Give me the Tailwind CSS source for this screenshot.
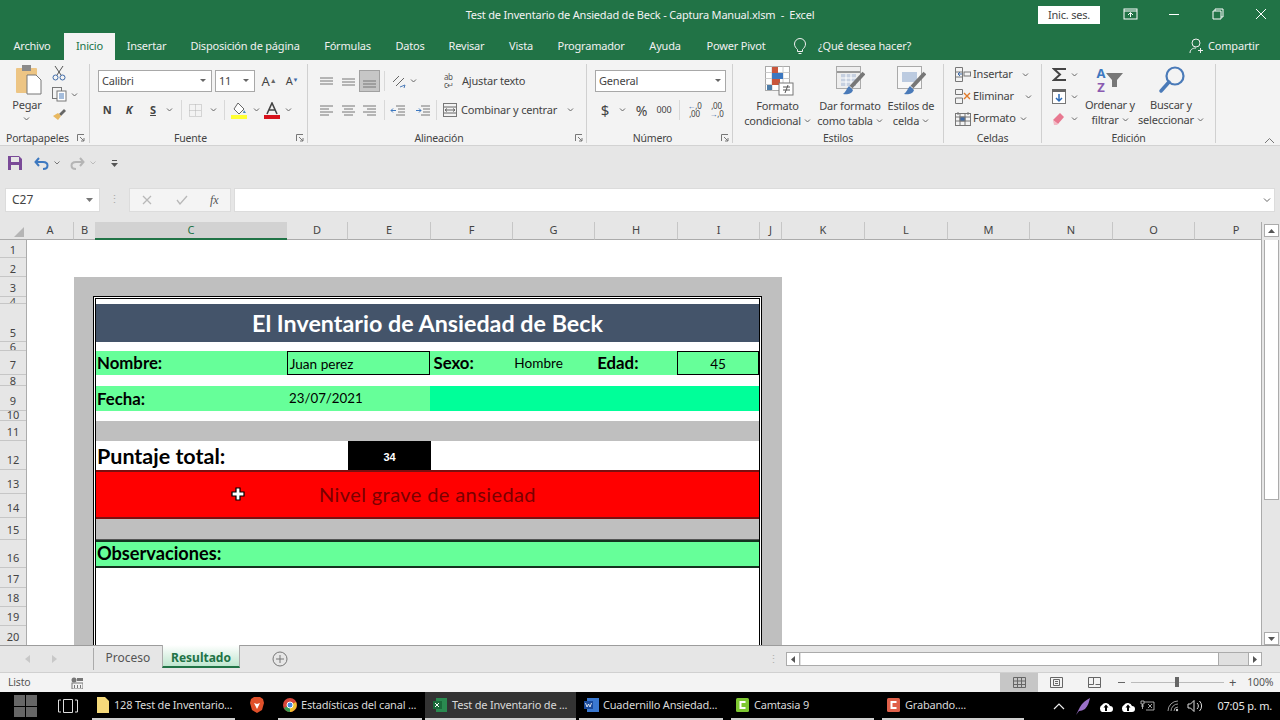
<!DOCTYPE html>
<html lang="es">
<head>
  <meta charset="UTF-8">
  <title>Test de Inventario de Ansiedad de Beck - Captura Manual.xlsm - Excel</title>
  <script src="https://cdn.jsdelivr.net/npm/@tailwindcss/browser@4"></script>
</head>
<body class="w-[1280px] h-[720px] overflow-hidden flex flex-col bg-white text-[#444] text-[11px] tracking-[-0.2px] font-['Noto_Sans',sans-serif]">

  <!-- Barra de titulo -->
  <div class="h-[33px] shrink-0 bg-[#217346] text-white flex items-start relative">
    <div class="w-full text-center pt-[7px] text-[11px] leading-[16px] text-[#f2f2f2]">Test de Inventario de Ansiedad de Beck - Captura Manual.xlsm &nbsp;-&nbsp; Excel</div>
    <div class="absolute left-[1038px] top-[6px] w-[62px] h-[18px] bg-white text-[#444] text-center leading-[18px]">Inic. ses.</div>
    <svg class="absolute left-[1123px] top-[8px]" width="15" height="12" fill="none" stroke="#fff"><rect x="1" y="1" width="13" height="10"/><path d="M1 3h13M7.500 9V5M5 7l2.500-2.500L10 7"/></svg>
    <svg class="absolute left-[1168px] top-[8px]" width="12" height="12" stroke="#fff"><path d="M1 6.500h10"/></svg>
    <svg class="absolute left-[1212px] top-[8px]" width="12" height="12" fill="none" stroke="#fff"><path d="M3 3V1h8v8H9M1 3h8v8H1z"/></svg>
    <svg class="absolute left-[1255px] top-[8px]" width="12" height="12" stroke="#fff"><path d="M1 1l10 10M11 1L1 11"/></svg>
  </div>

  <!-- Pestanas de la cinta -->
  <div class="h-[27px] shrink-0 bg-[#217346] text-[#f0f0f0] flex items-stretch leading-[26px]">
    <div class="w-[64px] text-center">Archivo</div>
    <div class="w-[51px] text-center bg-[#f3f3f3] text-[#217346]">Inicio</div>
    <div class="w-[63px] text-center">Insertar</div>
    <div class="w-[134px] text-center">Disposición de página</div>
    <div class="w-[71px] text-center">Fórmulas</div>
    <div class="w-[54px] text-center">Datos</div>
    <div class="w-[59px] text-center">Revisar</div>
    <div class="w-[50px] text-center">Vista</div>
    <div class="w-[90px] text-center">Programador</div>
    <div class="w-[58px] text-center">Ayuda</div>
    <div class="w-[84px] text-center">Power Pivot</div>
    <svg class="ml-[15px] mt-[5px]" width="14" height="17" fill="none" stroke="#f0f0f0"><path d="M4.500 11.500C3 10 1.500 8.500 1.500 6a5.500 5.500 0 0 1 11 0c0 2.500-1.500 4-3 5.500v2h-5zM5.500 15.500h3"/></svg>
    <div class="ml-[11px]">¿Qué desea hacer?</div>
    <div class="ml-auto mr-[21px] flex items-start pt-[5px] gap-[5px] leading-[16px]">
      <svg width="14" height="16" fill="none" stroke="#f0f0f0"><circle cx="7" cy="5" r="4"/><path d="M1 15c0-3 2-5 6-5M9 12.500h5M11.500 10v5"/></svg>
      <span>Compartir</span>
    </div>
  </div>

  <!-- Cinta -->
  <div class="h-[86px] shrink-0 bg-[#f3f3f3] border-b border-[#d2d2d2] flex items-stretch relative">

    <!-- Portapapeles -->
    <div class="w-[90px] shrink-0 border-r border-[#d0d0d0] mt-[4px] mb-[2px] flex flex-col">
      <div class="h-[70px] flex">
        <div class="w-[52px] flex flex-col items-center">
          <svg width="28" height="31" class="ml-[6px]"><rect x="1" y="4" width="21" height="25" rx="1" fill="#edc584"/><rect x="7" y="1" width="9" height="6" fill="#8a8a8a"/><path d="M12 11h9l5 5v14H12z" fill="#fff" stroke="#777"/></svg>
          <div class="mt-[3px] leading-[14px] ml-[2px]">Pegar</div>
          <svg class="mt-[5px]" width="7" height="4" fill="none" stroke="#666"><path d="M1 .5l2.500 2.500L6 .5"/></svg>
        </div>
        <div class="flex flex-col items-start">
          <svg width="14" height="16" fill="none" stroke="#3d6aa8" class="mt-[1px]"><path d="M3 1l6 9M11 1L5 10" stroke="#555"/><circle cx="3.500" cy="12.500" r="2.500"/><circle cx="10.500" cy="12.500" r="2.500"/></svg>
          <div class="flex items-center mt-[6px]">
            <svg width="15" height="15" fill="none" stroke="#777"><rect x=".5" y=".5" width="9" height="11" fill="#f3f3f3"/><rect x="5" y="4" width="9" height="10" fill="#fff"/><path d="M7 7h5M7 9h5M7 11h5" stroke="#4a7ab8"/></svg>
            <svg class="ml-[4px]" width="7" height="4" fill="none" stroke="#666"><path d="M1 .5l2.500 2.500L6 .5"/></svg>
          </div>
          <svg class="mt-[5px]" width="15" height="14"><path d="M7 7l5-5 2 2-5 5z" fill="#666"/><path d="M1 9l5-3 3 3-3 4z" fill="#e8b860"/></svg>
        </div>
      </div>
      <div class="flex items-center pl-[6px] h-[10px] leading-[10px] text-[10.500px]">Portapapeles
        <svg class="ml-[8px]" width="8" height="8" fill="none" stroke="#777"><path d="M.5 7V.5H7M3 3l4 4M7 4v3H4"/></svg>
      </div>
    </div>

    <!-- Fuente -->
    <div class="w-[218px] shrink-0 border-r border-[#d0d0d0] mt-[4px] mb-[2px] flex flex-col">
      <div class="h-[70px] pl-[8px] flex flex-col">
        <div class="flex items-center mt-[6px] h-[22px]">
          <div class="w-[114px] h-[22px] bg-white border border-[#a8a8a8] flex items-center justify-between px-[3px]"><span>Calibri</span><svg class="mr-[2px]" width="6" height="4" fill="#666"><path d="M0 0h6L3 3z"/></svg></div>
          <div class="ml-[3px] w-[40px] h-[22px] bg-white border border-[#a8a8a8] flex items-center justify-between px-[3px]"><span>11</span><svg class="mr-[2px]" width="6" height="4" fill="#666"><path d="M0 0h6L3 3z"/></svg></div>
          <div class="ml-[2px] w-[24px] text-center text-[13px] leading-[22px]">A<sup class="text-[#666] text-[7px]">▲</sup></div>
          <div class="w-[22px] text-center text-[11px] leading-[22px]">A<sup class="text-[#3d6aa8] text-[6px]">▼</sup></div>
        </div>
        <div class="flex items-center mt-[8px] h-[20px]">
          <div class="w-[18px] text-center font-bold">N</div>
          <div class="w-[26px] text-center font-bold italic">K</div>
          <div class="w-[22px] text-center font-bold underline">S</div>
          <div class="w-[10px] flex justify-center"><svg width="7" height="4" fill="none" stroke="#666"><path d="M1 .5l2.500 2.500L6 .5"/></svg></div>
          <div class="ml-[7px] w-px h-[20px] bg-[#d8d8d8]"></div>
          <div class="w-[27px] flex justify-center"><svg width="13" height="13" fill="none" stroke="#b5b5b5" stroke-dasharray="1 1"><path d="M.5.5h12v12H.5zM.5 6.500h12M6.500.5v12"/></svg></div>
          <div class="w-[8px] flex justify-center"><svg width="7" height="4" fill="none" stroke="#666"><path d="M1 .5l2.500 2.500L6 .5"/></svg></div>
          <div class="ml-[7px] w-px h-[20px] bg-[#d8d8d8]"></div>
          <div class="w-[28px] flex justify-center"><svg width="16" height="17"><path d="M7 1l6 6-5 5-5-5z" fill="#fff" stroke="#666"/><path d="M13 8l2 3h-3z" fill="#4a88c0"/><rect y="13" width="16" height="4" fill="#ffff33"/></svg></div>
          <div class="w-[7px] flex justify-center"><svg width="7" height="4" fill="none" stroke="#666"><path d="M1 .5l2.500 2.500L6 .5"/></svg></div>
          <div class="w-[24px] flex justify-center"><svg width="16" height="17"><path d="M3 12L8 1l5 11M5 8h6" fill="none" stroke="#444" stroke-width="1.600"/><rect y="13" width="16" height="4" fill="#d8121c"/></svg></div>
          <div class="w-[8px] flex justify-center"><svg width="7" height="4" fill="none" stroke="#666"><path d="M1 .5l2.500 2.500L6 .5"/></svg></div>
        </div>
      </div>
      <div class="flex items-center h-[10px] leading-[10px] text-[10.500px] relative"><span class="w-full text-center pr-[16px]">Fuente</span>
        <svg class="absolute right-[3px]" width="8" height="8" fill="none" stroke="#777"><path d="M.5 7V.5H7M3 3l4 4M7 4v3H4"/></svg>
      </div>
    </div>

    <!-- Alineacion -->
    <div class="w-[279px] shrink-0 border-r border-[#d0d0d0] mt-[4px] mb-[2px] flex flex-col">
      <div class="h-[70px] flex flex-col pl-[7px]">
        <div class="flex items-center mt-[6px] h-[22px]">
          <div class="w-[22px] flex justify-center"><svg width="13" height="9" stroke="#777"><path d="M0 1h13M0 4h13M0 7h13"/></svg></div>
          <div class="w-[22px] flex justify-center"><svg width="13" height="9" stroke="#777"><path d="M0 2h13M0 5h13M0 8h13"/></svg></div>
          <div class="w-[21px] h-[22px] bg-[#c6c6c6] border border-[#a0a0a0] flex items-end justify-center pb-[3px]"><svg width="13" height="9" stroke="#777"><path d="M0 2h13M0 5h13M0 8h13"/></svg></div>
          <div class="ml-[4px] w-px h-[20px] bg-[#d8d8d8]"></div>
          <div class="ml-[7px] w-[15px]"><svg width="15" height="15" fill="none" stroke="#666"><path d="M1 8l6-6M4 12l8-8"/><path d="M8 13l5-2-1 3" stroke="#4a7ab8"/></svg></div>
          <svg class="ml-[3px]" width="7" height="4" fill="none" stroke="#666"><path d="M1 .5l2.500 2.500L6 .5"/></svg>
          <div class="ml-[27px] w-[17px] text-[8px] leading-[8px] tracking-[-0.5px] text-[#555]">ab<br>c↵</div>
          <div class="ml-px">Ajustar texto</div>
        </div>
        <div class="flex items-center mt-[8px] h-[20px]">
          <div class="w-[22px] flex justify-center"><svg width="13" height="11" stroke="#777"><path d="M0 1h13M0 4h9M0 7h13M0 10h9"/></svg></div>
          <div class="w-[22px] flex justify-center"><svg width="13" height="11" stroke="#777"><path d="M0 1h13M2 4h9M0 7h13M2 10h9"/></svg></div>
          <div class="w-[21px] flex justify-center"><svg width="13" height="11" stroke="#777"><path d="M0 1h13M4 4h9M0 7h13M4 10h9"/></svg></div>
          <div class="ml-[4px] w-px h-[20px] bg-[#d8d8d8]"></div>
          <div class="ml-[5px] w-[22px]"><svg width="15" height="11" fill="none" stroke="#777"><path d="M6 1h9M8 4h7M8 7h7M6 10h9"/><path d="M6 5.500H1m2-2l-2 2 2 2" stroke="#3d78c0"/></svg></div>
          <div class="ml-[3px] w-[21px]"><svg width="15" height="11" fill="none" stroke="#777"><path d="M6 1h9M8 4h7M8 7h7M6 10h9"/><path d="M1 5.500h5m-2-2l2 2-2 2" stroke="#3d78c0"/></svg></div>
          <div class="w-px h-[20px] bg-[#d8d8d8]"></div>
          <div class="ml-[6px] w-[18px]"><svg width="14" height="14" fill="none" stroke="#777"><rect x=".5" y=".5" width="13" height="13"/><path d="M1 4h12M1 10h12M2 7h10M4 5.500L2 7l2 1.500M10 5.500L12 7l-2 1.500" stroke="#666"/></svg></div>
          <div>Combinar y centrar</div>
          <svg class="ml-[10px]" width="7" height="4" fill="none" stroke="#666"><path d="M1 .5l2.500 2.500L6 .5"/></svg>
        </div>
      </div>
      <div class="flex items-center h-[10px] leading-[10px] text-[10.500px] relative"><span class="w-full text-center pr-[16px]">Alineación</span>
        <svg class="absolute right-[3px]" width="8" height="8" fill="none" stroke="#777"><path d="M.5 7V.5H7M3 3l4 4M7 4v3H4"/></svg>
      </div>
    </div>

    <!-- Numero -->
    <div class="w-[146px] shrink-0 border-r border-[#d0d0d0] mt-[4px] mb-[2px] flex flex-col">
      <div class="h-[70px] flex flex-col pl-[8px]">
        <div class="mt-[6px] w-[131px] h-[22px] bg-white border border-[#a8a8a8] flex items-center justify-between px-[3px]"><span>General</span><svg class="mr-[1px]" width="6" height="4" fill="#666"><path d="M0 0h6L3 3z"/></svg></div>
        <div class="flex items-center mt-[8px] h-[20px]">
          <div class="w-[20px] text-center text-[15px]">$</div>
          <svg class="ml-[4px]" width="7" height="4" fill="none" stroke="#666"><path d="M1 .5l2.500 2.500L6 .5"/></svg>
          <div class="ml-[5px] w-[21px] text-center text-[14px]">%</div>
          <div class="ml-[1px] w-[22px] text-center text-[9px]">000</div>
          <div class="ml-[4px] w-px h-[20px] bg-[#d8d8d8]"></div>
          <div class="ml-[6px] w-[17px] text-[8px] leading-[8px] text-center"><span class="text-[#3d6aa8]">←</span>,0<br>,00</div>
          <div class="ml-[5px] w-[17px] text-[8px] leading-[8px] text-center">,00<br><span class="text-[#3d6aa8]">→</span>,0</div>
        </div>
      </div>
      <div class="flex items-center h-[10px] leading-[10px] text-[10.500px] relative"><span class="w-full text-center pr-[14px]">Número</span>
        <svg class="absolute right-[3px]" width="8" height="8" fill="none" stroke="#777"><path d="M.5 7V.5H7M3 3l4 4M7 4v3H4"/></svg>
      </div>
    </div>

    <!-- Estilos -->
    <div class="w-[211px] shrink-0 border-r border-[#d0d0d0] mt-[4px] mb-[2px] flex flex-col">
      <div class="h-[70px] flex text-center leading-[15px]">
        <div class="w-[77px] ml-[6px] flex flex-col items-center">
          <svg width="29" height="30" class="mt-[2px] ml-[3px]"><rect x=".5" y=".5" width="24" height="24" fill="#fff" stroke="#aaa"/><path d="M.5 6.500h24M.5 12.500h24M.5 18.500h24M7 .5v24M18 .5v24" stroke="#ccc"/><rect x="7" y="1" width="6" height="6" fill="#c9563c"/><rect x="7" y="7" width="11" height="6" fill="#3d78c0"/><rect x="7" y="13" width="8" height="6" fill="#c9563c"/><rect x="2" y="19" width="5" height="5" fill="#4d7da8"/><rect x="14" y="17" width="14" height="12" fill="#fff" stroke="#777"/><path d="M18 21h7M18 24h7M23 19l-3 8" stroke="#555" fill="none"/></svg>
          <div class="mt-[2px]">Formato</div>
          <div class="flex items-center gap-[3px] whitespace-nowrap">condicional<svg width="7" height="4" fill="none" stroke="#666"><path d="M1 .5l2.500 2.500L6 .5"/></svg></div>
        </div>
        <div class="w-[70px] -ml-px flex flex-col items-center">
          <svg width="29" height="30" class="mt-[2px]"><rect x=".5" y=".5" width="24" height="22" fill="#eee" stroke="#aaa"/><path d="M1 6h23" stroke="#999" stroke-width="2"/><rect x="5" y="8" width="15" height="12" fill="#c6d0e0"/><path d="M5 12h15M5 16h15M10 8v12M15 8v12" stroke="#fff"/><path d="M28 7L15 21" stroke="#777" stroke-width="4"/><path d="M13 20l4 4c-1 4-6 5-10 4 3-2 3-5 6-8z" fill="#4a7ab8"/></svg>
          <div class="mt-[2px]">Dar formato</div>
          <div class="flex items-center gap-[3px] whitespace-nowrap">como tabla<svg width="7" height="4" fill="none" stroke="#666"><path d="M1 .5l2.500 2.500L6 .5"/></svg></div>
        </div>
        <div class="w-[54px] -ml-px flex flex-col items-center">
          <svg width="29" height="30" class="mt-[2px]"><rect x=".5" y=".5" width="24" height="22" fill="#f8f8f8" stroke="#aaa"/><rect x="5" y="6" width="15" height="10" fill="#bccbe0"/><path d="M28 7L15 21" stroke="#777" stroke-width="4"/><path d="M13 20l4 4c-1 4-6 5-10 4 3-2 3-5 6-8z" fill="#4a7ab8"/></svg>
          <div class="mt-[2px] whitespace-nowrap">Estilos de</div>
          <div class="flex items-center gap-[3px]">celda<svg width="7" height="4" fill="none" stroke="#666"><path d="M1 .5l2.500 2.500L6 .5"/></svg></div>
        </div>
      </div>
      <div class="h-[10px] leading-[10px] text-[10.500px] text-center">Estilos</div>
    </div>

    <!-- Celdas -->
    <div class="w-[98px] shrink-0 border-r border-[#d0d0d0] mt-[4px] mb-[2px] flex flex-col">
      <div class="h-[70px] pl-[11px] flex flex-col pt-[2px] gap-[5px]">
        <div class="flex items-center h-[17px]"><svg width="16" height="15" fill="none" stroke="#777"><path d="M.5.5h7v14h-7zM.5 5h7M.5 10h7"/><rect x="9" y="5" width="6.500" height="4" /><path d="M7 7H3m2-2L3 7l2 2" stroke="#3d6aa8"/></svg><span class="ml-[2px]">Insertar</span><svg class="ml-[9px]" width="7" height="4" fill="none" stroke="#666"><path d="M1 .5l2.500 2.500L6 .5"/></svg></div>
        <div class="flex items-center h-[17px]"><svg width="16" height="15" fill="none" stroke="#777"><path d="M.5.5h7v5h-7zM.5 9h7v5.500h-7z"/><path d="M9 4l6 6M15 4l-6 6" stroke="#e07a2a" stroke-width="1.400"/></svg><span class="ml-[2px]">Eliminar</span><svg class="ml-[11px]" width="7" height="4" fill="none" stroke="#666"><path d="M1 .5l2.500 2.500L6 .5"/></svg></div>
        <div class="flex items-center h-[17px]"><svg width="16" height="15" fill="none" stroke="#777"><rect x=".5" y="2.500" width="15" height="12"/><path d="M.5 6h15M.5 10h15M5 2.500v12M10 2.500v12M3 1v3M13 1v3"/><rect x="5" y="6" width="5" height="4" fill="#3d6aa8"/></svg><span class="ml-[2px]">Formato</span><svg class="ml-[4px]" width="7" height="4" fill="none" stroke="#666"><path d="M1 .5l2.500 2.500L6 .5"/></svg></div>
      </div>
      <div class="h-[10px] leading-[10px] text-[10.500px] text-center">Celdas</div>
    </div>

    <!-- Edicion -->
    <div class="w-[174px] shrink-0 border-r border-[#d0d0d0] mt-[4px] mb-[2px] flex flex-col">
      <div class="h-[70px] flex">
        <div class="w-[35px] ml-[10px] flex flex-col pt-[2px] gap-[5px]">
          <div class="flex items-center h-[17px]"><svg width="15" height="15" fill="none" stroke="#444" stroke-width="2"><path d="M14 2H2l6 5.500L2 13h12"/></svg><svg class="ml-[4px]" width="7" height="4" fill="none" stroke="#666"><path d="M1 .5l2.500 2.500L6 .5"/></svg></div>
          <div class="flex items-center h-[17px]"><svg width="14" height="15"><rect x=".5" y=".5" width="13" height="14" fill="#fff" stroke="#777"/><rect width="14" height="3" fill="#666"/><path d="M7 5v7M4 9l3 3 3-3" fill="none" stroke="#2a6ab8" stroke-width="1.500"/></svg><svg class="ml-[5px]" width="7" height="4" fill="none" stroke="#666"><path d="M1 .5l2.500 2.500L6 .5"/></svg></div>
          <div class="flex items-center h-[17px]"><svg width="13" height="13"><path d="M8 1l4 4-6 7-5-4z" fill="#e87890"/><path d="M1 8l5 4-1 1H2z" fill="#f2b8c4"/></svg><svg class="ml-[6px]" width="7" height="4" fill="none" stroke="#666"><path d="M1 .5l2.500 2.500L6 .5"/></svg></div>
        </div>
        <div class="w-[54px] -ml-[4px] flex flex-col items-center text-center leading-[15px]">
          <div class="flex h-[30px] items-center mt-[1px]"><div class="text-[13px] leading-[14px] font-bold"><span class="text-[#3d78c0]">A</span><br><span class="text-[#8a5ab0]">Z</span></div><svg class="ml-[1px]" width="17" height="14"><path d="M0 0h17l-6 7v7H6V7z" fill="#777"/></svg></div>
          <div class="mt-[2px] whitespace-nowrap">Ordenar y</div>
          <div class="flex items-center gap-[3px]">filtrar<svg width="7" height="4" fill="none" stroke="#666"><path d="M1 .5l2.500 2.500L6 .5"/></svg></div>
        </div>
        <div class="w-[68px] flex flex-col items-center text-center leading-[15px]">
          <svg class="mt-[1px]" width="27" height="30" fill="none" stroke="#4a7ab8"><circle cx="17" cy="11" r="8.500" stroke-width="2.200"/><path d="M11 17l-8 9" stroke-width="3.500" stroke-linecap="round"/></svg>
          <div class="mt-[2px] whitespace-nowrap">Buscar y</div>
          <div class="flex items-center gap-[3px] whitespace-nowrap">seleccionar<svg width="7" height="4" fill="none" stroke="#666"><path d="M1 .5l2.500 2.500L6 .5"/></svg></div>
        </div>
      </div>
      <div class="h-[10px] leading-[10px] text-[10.500px] text-center">Edición</div>
    </div>

    <svg class="absolute left-[1264px] top-[77px]" width="11" height="7" fill="none" stroke="#777"><path d="M1 6l4.500-4.500L10 6"/></svg>
  </div>

  <!-- Barra de acceso rapido -->
  <div class="h-[34px] shrink-0 bg-[#e6e6e6] flex items-center pl-[8px]">
    <svg width="14" height="14"><path d="M0 0h11l3 3v11H0z" fill="#7a4a98"/><rect x="3" y="1" width="8" height="5" fill="#e6e6e6"/><rect x="3" y="9" width="8" height="5" fill="#e6e6e6"/></svg>
    <svg class="ml-[12px]" width="15" height="13" fill="none" stroke="#3d78c0" stroke-width="2"><path d="M5 1L1.500 5 5 9M2 5h7c6 0 6 7 0 7"/></svg>
    <svg class="ml-[5px]" width="6" height="4" fill="none" stroke="#777"><path d="M.5.5L3 3 5.500.5"/></svg>
    <svg class="ml-[10px]" width="15" height="13" fill="none" stroke="#b5b5b5" stroke-width="2"><path d="M10 1l3.500 4L10 9M13 5H6c-6 0-6 7 0 7"/></svg>
    <svg class="ml-[5px]" width="6" height="4" fill="none" stroke="#bbb"><path d="M.5.5L3 3 5.500.5"/></svg>
    <svg class="ml-[15px]" width="7" height="7" fill="#555"><path d="M1 0h5v1H1zM0 3h7L3.500 7z"/></svg>
  </div>

  <!-- Barra de formulas -->
  <div class="h-[42px] shrink-0 bg-[#e6e6e6] flex items-start pt-[8px] pl-[5px]">
    <div class="w-[95px] h-[24px] bg-white border border-[#dcdcdc] flex items-center justify-between pl-[6px] pr-[6px] text-[12px] tracking-normal"><span>C27</span><svg width="7" height="4" fill="#777"><path d="M0 0h7L3.500 4z"/></svg></div>
    <div class="w-[29px] h-[24px] text-[#aaa] text-center leading-[22px]">⋮</div>
    <div class="w-[102px] h-[24px] bg-[#f4f4f4] border border-[#dcdcdc] flex items-center">
      <svg class="ml-[12px]" width="10" height="10" stroke="#b8b8b8" stroke-width="1.300"><path d="M1 1l8 8M9 1L1 9"/></svg>
      <svg class="ml-[24px]" width="12" height="10" fill="none" stroke="#b8b8b8" stroke-width="1.300"><path d="M1 5l3 4 7-8"/></svg>
      <span class="ml-[22px] text-[12px] italic font-['Liberation_Serif',serif] text-[#555]">fx</span>
    </div>
    <div class="ml-[3px] w-[1041px] h-[24px] bg-white border border-[#dcdcdc] flex items-center justify-end pr-[3px]"><svg width="8" height="5" fill="none" stroke="#666"><path d="M1 .5l3 3 3-3"/></svg></div>
  </div>

  <!-- Encabezados de columna -->
  <div class="h-[18px] shrink-0 bg-[#e6e6e6] flex text-center leading-[16px] text-[11px] tracking-normal text-[#444]">
    <div class="w-[27px] flex items-end justify-end pr-[3px] pb-[2px] border-b border-[#ababab]"><svg width="10" height="10" fill="#b5b5b5"><path d="M10 0v10H0z"/></svg></div>
    <div class="w-[47px] border-r border-b border-[#c6c6c6] border-b-[#ababab]">A</div>
    <div class="w-[21px] border-b border-[#ababab]">B</div>
    <div class="w-[192px] bg-[#d2d2d2] border-b-2 border-[#217346] text-[#217346]">C</div>
    <div class="w-[61px] border-r border-b border-[#c6c6c6] border-b-[#ababab]">D</div>
    <div class="w-[83px] border-r border-b border-[#c6c6c6] border-b-[#ababab]">E</div>
    <div class="w-[82px] border-r border-b border-[#c6c6c6] border-b-[#ababab]">F</div>
    <div class="w-[82px] border-r border-b border-[#c6c6c6] border-b-[#ababab]">G</div>
    <div class="w-[83px] border-r border-b border-[#c6c6c6] border-b-[#ababab]">H</div>
    <div class="w-[82px] border-r border-b border-[#c6c6c6] border-b-[#ababab]">I</div>
    <div class="w-[22px] border-r border-b border-[#c6c6c6] border-b-[#ababab]">J</div>
    <div class="w-[83px] border-r border-b border-[#c6c6c6] border-b-[#ababab]">K</div>
    <div class="w-[83px] border-r border-b border-[#c6c6c6] border-b-[#ababab]">L</div>
    <div class="w-[82px] border-r border-b border-[#c6c6c6] border-b-[#ababab]">M</div>
    <div class="w-[83px] border-r border-b border-[#c6c6c6] border-b-[#ababab]">N</div>
    <div class="w-[82px] border-r border-b border-[#c6c6c6] border-b-[#ababab]">O</div>
    <div class="w-[67px] pl-[16px] border-r border-b border-[#ababab]">P</div>
    <div class="w-[18px] flex justify-end pr-px pt-[2px]">
      <div class="w-[15px] h-[13px] bg-white border border-[#ababab] flex items-center justify-center"><svg width="7" height="4" fill="#555"><path d="M3.500 0L7 4H0z"/></svg></div>
    </div>
  </div>

  <!-- Hoja -->
  <div class="h-[405px] shrink-0 flex overflow-hidden">
    <!-- Encabezados de fila -->
    <div class="w-[27px] shrink-0 bg-[#e6e6e6] border-r border-[#ababab] flex flex-col text-[11px] leading-none tracking-normal text-[#444] text-center overflow-hidden">
      <div class="h-[18px] shrink-0 border-b border-[#c6c6c6] flex items-end justify-center pb-[2px]">1</div>
      <div class="h-[19px] shrink-0 border-b border-[#c6c6c6] flex items-end justify-center pb-[2px]">2</div>
      <div class="h-[20px] shrink-0 border-b border-[#c6c6c6] flex items-end justify-center pb-[3px]">3</div>
      <div class="h-[7px] shrink-0 border-b border-[#c6c6c6] flex items-end justify-center overflow-hidden"><span class="-mb-[4px] text-[#555]">4</span></div>
      <div class="h-[38px] shrink-0 border-b border-[#c6c6c6] flex items-end justify-center pb-[3px]">5</div>
      <div class="h-[9px] shrink-0 border-b border-[#c6c6c6] flex items-end justify-center overflow-hidden"><span class="-mb-[2px]">6</span></div>
      <div class="h-[24px] shrink-0 border-b border-[#c6c6c6] flex items-end justify-center pb-[4px]">7</div>
      <div class="h-[11px] shrink-0 border-b border-[#c6c6c6] flex items-end justify-center overflow-hidden"><span class="-mb-px">8</span></div>
      <div class="h-[25px] shrink-0 border-b border-[#c6c6c6] flex items-end justify-center pb-[4px]">9</div>
      <div class="h-[10px] shrink-0 border-b border-[#c6c6c6] flex items-end justify-center overflow-hidden"><span>10</span></div>
      <div class="h-[20px] shrink-0 border-b border-[#c6c6c6] flex items-end justify-center pb-[3px]">11</div>
      <div class="h-[29px] shrink-0 border-b border-[#c6c6c6] flex items-end justify-center pb-[4px]">12</div>
      <div class="h-[24px] shrink-0 border-b border-[#c6c6c6] flex items-end justify-center pb-[4px]">13</div>
      <div class="h-[24px] shrink-0 border-b border-[#c6c6c6] flex items-end justify-center pb-[4px]">14</div>
      <div class="h-[22px] shrink-0 border-b border-[#c6c6c6] flex items-end justify-center pb-[4px]">15</div>
      <div class="h-[28px] shrink-0 border-b border-[#c6c6c6] flex items-end justify-center pb-[4px]">16</div>
      <div class="h-[20px] shrink-0 border-b border-[#c6c6c6] flex items-end justify-center pb-[3px]">17</div>
      <div class="h-[19px] shrink-0 border-b border-[#c6c6c6] flex items-end justify-center pb-[3px]">18</div>
      <div class="h-[19px] shrink-0 border-b border-[#c6c6c6] flex items-end justify-center pb-[3px]">19</div>
      <div class="h-[19px] shrink-0 flex items-end justify-center pb-[3px]">20</div>
    </div>

    <!-- Celdas -->
    <div class="w-[1235px] shrink-0 border-r border-[#ababab] pt-[37px] pl-[47px] overflow-hidden font-['Lato',sans-serif] tracking-normal text-black">
      <div class="w-[708px] h-[400px] bg-[#bfbfbf] pt-[19px] pl-[19px]">
        <div class="w-[669px] h-[400px] border-[3px] border-double border-black bg-white flex flex-col">
          <div class="h-[5px] shrink-0"></div>
          <div class="h-[38px] shrink-0 bg-[#44546a] text-white text-center font-bold text-[23.300px] leading-[38px]">El Inventario de Ansiedad de Beck</div>
          <div class="h-[9px] shrink-0"></div>
          <div class="h-[24px] shrink-0 bg-[#66ff99] flex items-center font-bold text-[16.800px]">
            <div class="w-[191px] pl-[1px]">Nombre:</div>
            <div class="w-[144px] h-[24px] border border-black font-normal text-[13.600px] leading-[25px] pl-[2px]">Juan perez</div>
            <div class="w-[82px] pl-[3px]">Sexo:</div>
            <div class="w-[82px] pl-[2px] font-normal text-[13.600px] pt-[1px]">Hombre</div>
            <div class="w-[83px] pl-[3px]">Edad:</div>
            <div class="w-[82px] h-[24px] border border-black font-normal text-[13.600px] text-center leading-[25px]">45</div>
          </div>
          <div class="h-[11px] shrink-0"></div>
          <div class="h-[25px] shrink-0 flex items-center font-bold text-[16.800px] bg-[#00ff99]">
            <div class="w-[334px] h-full bg-[#66ff99] flex items-center">
              <div class="w-[191px] pl-[1px]">Fecha:</div>
              <div class="font-normal text-[13.300px] pl-[2px] pt-[1px]">23/07/2021</div>
            </div>
          </div>
          <div class="h-[10px] shrink-0"></div>
          <div class="h-[20px] shrink-0 bg-[#bfbfbf]"></div>
          <div class="h-[29px] shrink-0 flex items-center font-bold text-[21.500px]">
            <div class="w-[252px] pl-[1px] pt-[1px]">Puntaje total:</div>
            <div class="w-[83px] h-full bg-black text-white text-center text-[11px] leading-[32px] font-['Liberation_Sans',sans-serif]">34</div>
          </div>
          <div class="h-[49px] shrink-0 bg-[#ff0000] border-y-2 border-[#7a1010] text-[#7a0000] text-center text-[20px] tracking-[0.4px] leading-[45px] relative">
            Nivel grave de ansiedad
            <svg class="absolute left-[135px] top-[15px]" width="14" height="14"><path d="M5 1h4v4h4v4H9v4H5V9H1V5h4z" fill="#fff" stroke="#000" stroke-width="1.200"/></svg>
          </div>
          <div class="h-[21px] shrink-0 bg-[#bfbfbf] border-b border-[#555]"></div>
          <div class="h-[28px] shrink-0 bg-[#66ff99] border-y-2 border-black/80 font-bold text-[18.200px] leading-[22px] pl-[1px]">Observaciones:</div>
        </div>
      </div>
    </div>

    <!-- Barra vertical -->
    <div class="w-[18px] shrink-0 bg-[#e6e6e6] flex flex-col items-end pr-px">
      <div class="w-[15px] h-[260px] bg-white border-x border-b border-[#ababab]"></div>
      <div class="mt-auto w-[15px] h-[13px] bg-white border border-[#ababab] flex items-center justify-center"><svg width="7" height="4" fill="#555"><path d="M0 0h7L3.500 4z"/></svg></div>
    </div>
  </div>

  <!-- Pestanas de hojas -->
  <div class="h-[27px] shrink-0 bg-[#e6e6e6] border-t border-[#9c9c9c] flex items-start relative z-10">
    <svg class="ml-[25px] mt-[9px]" width="5" height="8" fill="#c8c8c8"><path d="M5 0v8L0 4z"/></svg>
    <svg class="ml-[22px] mt-[9px]" width="5" height="8" fill="#c8c8c8"><path d="M0 0v8l5-4z"/></svg>
    <div class="ml-[36px] mt-[2px] w-px h-[22px] bg-[#ababab]"></div>
    <div class="w-[68px] text-center leading-[24px] text-[12px] tracking-normal text-[#555]">Proceso</div>
    <div class="w-[78px] h-[23px] -mt-px bg-gradient-to-b from-white to-[#bfe6cf] border-x border-b-2 border-x-[#ababab] border-b-[#217346] text-center font-bold text-[12px] tracking-normal leading-[25px] text-[#217346]">Resultado</div>
    <svg class="ml-[32px] mt-[5px]" width="16" height="16" fill="none" stroke="#777"><circle cx="8" cy="8" r="7"/><path d="M8 4v8M4 8h8"/></svg>
    <div class="absolute left-[768px] top-[5px] text-[#b0b0b0] leading-[16px]">⋮</div>
    <div class="absolute left-[786px] top-[6px] w-[476px] h-[14px] bg-[#e0e0e0] border border-[#ababab] flex items-stretch">
      <div class="w-[13px] bg-white border-r border-[#ababab] flex items-center justify-center"><svg width="4" height="7" fill="#555"><path d="M4 0v7L0 3.500z"/></svg></div>
      <div class="ml-px w-[418px] bg-white border-r border-[#ababab]"></div>
      <div class="ml-auto w-[13px] bg-white border-l border-[#ababab] flex items-center justify-center"><svg width="4" height="7" fill="#555"><path d="M0 0v7l4-3.500z"/></svg></div>
    </div>
  </div>

  <!-- Barra de estado -->
  <div class="h-[20px] shrink-0 bg-[#f3f3f3] border-t border-[#d0d0d0] flex items-center text-[10.500px] text-[#555]">
    <span class="ml-[8px] w-[63px]">Listo</span>
    <svg width="12" height="12" fill="#777"><circle cx="3" cy="3" r="2.500"/><rect x="1" y="6" width="11" height="6" fill="none" stroke="#777"/><path d="M6 1h6v3H6zM3 8h1v3H3zM6 8h1v3H6zM9 8h1v3H9z"/></svg>
    <div class="ml-[917px] w-[38px] h-full bg-[#c6c6c6] flex items-center justify-center"><svg width="13" height="11" fill="none" stroke="#666"><path d="M.5.5h12v10H.5zM.5 4h12M.5 7.500h12M4.500.5v10M8.500.5v10"/></svg></div>
    <svg class="ml-[12px]" width="13" height="11" fill="none" stroke="#666"><path d="M.5.5h12v10H.5zM3.500 2.500h6v6h-6zM5 4.500h3M5 6.500h3"/></svg>
    <svg class="ml-[25px]" width="13" height="11" fill="none" stroke="#666"><path d="M.5.5h12v10H.5zM.5 7.500h5V.5M12.500 7.500h-5"/></svg>
    <span class="ml-[17px] w-[7px] h-[1.500px] bg-[#666]"></span>
    <div class="ml-[6px] w-[93px] h-px bg-[#bbb] relative"><div class="absolute left-[44px] -top-[5px] w-[4px] h-[10px] bg-[#666]"></div></div>
    <span class="ml-[5px] text-[13px] leading-none">+</span>
    <span class="ml-[11px] w-[26px] text-right">100%</span>
  </div>

  <!-- Barra de tareas -->
  <div class="h-[28px] shrink-0 bg-black text-[#d8d8d8] flex items-stretch text-[11px] relative">
    <div class="ml-[14px] mt-[3px] w-[23px] h-[22px] grid grid-cols-2 gap-[1px]">
      <div class="bg-[#666]"></div><div class="bg-[#666]"></div><div class="bg-[#666]"></div><div class="bg-[#666]"></div>
    </div>
    <svg class="ml-[21px] mt-[7px]" width="20" height="14" fill="none" stroke="#ddd"><path d="M3 1H.5v12H3M17 1h2.500v12H17M5.500.5h9v13h-9z"/></svg>
    <div class="ml-[14px] w-[143px] border-b-2 border-[#cfcfcf] flex items-center pl-[5px] gap-[5px] whitespace-nowrap">
      <svg width="12" height="16"><path d="M0 0h8l4 4v12H0z" fill="#f5d97a"/></svg><span>128 Test de Inventario...</span>
    </div>
    <div class="w-[43px] flex items-center justify-center pb-[2px]">
      <svg width="14" height="16"><path d="M1 2l3-2h6l3 2 1 4-2 7-5 3-5-3-2-7z" fill="#e0502a"/><path d="M4 6l3 1 3-1-3 6z" fill="#fff"/></svg>
    </div>
    <div class="w-[144px] border-b-2 border-[#cfcfcf] flex items-center pl-[5px] gap-[4px]">
      <svg width="14" height="14"><circle cx="7" cy="7" r="7" fill="#d8463a"/><path d="M7 7L1 10a7 7 0 0 0 6 4z" fill="#3a9c50"/><path d="M7 7l6-3a7 7 0 0 1-6 10z" fill="#f0c030"/><circle cx="7" cy="7" r="3" fill="#4a88e0" stroke="#fff"/></svg><span class="whitespace-nowrap">Estadísticas del canal ...</span>
    </div>
    <div class="ml-[3px] w-[151px] bg-[#333] border-b-2 border-[#cfcfcf] flex items-center pl-[8px] gap-[5px]">
      <svg width="14" height="14"><rect x="3" width="11" height="14" fill="#2a8a50"/><rect y="3" width="9" height="8" fill="#1a6a3a"/><path d="M2 5l4 4M6 5L2 9" stroke="#fff"/></svg><span class="whitespace-nowrap">Test de Inventario de ...</span>
    </div>
    <div class="ml-[3px] w-[144px] border-b-2 border-[#cfcfcf] flex items-center pl-[5px] gap-[4px]">
      <svg width="15" height="14"><rect x="3" width="12" height="14" fill="#3a78d0"/><rect y="3" width="9" height="8" fill="#1a4a9a"/><path d="M1.500 5l1.500 4 1.500-3 1.500 3 1.500-4" stroke="#fff" fill="none" stroke-width=".8"/></svg><span class="whitespace-nowrap">Cuadernillo Ansiedad...</span>
    </div>
    <div class="ml-[8px] w-[143px] border-b-2 border-[#cfcfcf] flex items-center pl-[5px] gap-[4px]">
      <svg width="13" height="14"><rect width="13" height="14" rx="1.500" fill="#7ec832"/><path d="M9.500 4h-5v6h5" fill="none" stroke="#fff" stroke-width="2"/></svg><span class="ml-[1px]">Camtasia 9</span>
    </div>
    <div class="ml-[8px] w-[142px] border-b-2 border-[#cfcfcf] flex items-center pl-[5px] gap-[4px]">
      <svg width="13" height="14"><rect width="13" height="14" rx="1.500" fill="#e0604a"/><path d="M9.500 4h-5v6h5" fill="none" stroke="#fff" stroke-width="2"/></svg><span class="ml-[1px]">Grabando....</span>
    </div>
    <div class="ml-auto flex items-center pr-[8px] text-[#e8e8e8]">
      <svg width="12" height="7" fill="none" stroke="#eee" stroke-width="1.200"><path d="M1 6l5-5 5 5"/></svg>
      <svg class="ml-[11px]" width="14" height="17"><path d="M0 17L4 9c2-4 6-7 10-9-1 4-2 8-5 11-2 1-4 2-6 2z" fill="#9a70c8"/></svg>
      <svg class="ml-[8px]" width="16" height="11"><path d="M4 11a4 4 0 0 1 0-7 4.500 4.500 0 0 1 8 1 3 3 0 0 1 0 6z" fill="#fff"/><path d="M8 3.500L5.500 6.500H7V10h2V6.500h1.500z" fill="#000"/></svg>
      <svg class="ml-[6px]" width="16" height="11"><path d="M4 11a4 4 0 0 1 0-7 4.500 4.500 0 0 1 8 1 3 3 0 0 1 0 6z" fill="#fff"/><path d="M8 3.500L5.500 6.500H7V10h2V6.500h1.500z" fill="#000"/></svg>
      <svg class="ml-[4px]" width="15" height="12" fill="none" stroke="#ccc" stroke-width=".8"><path d="M4 2h10v8H6M1 1h3v3H1zM1 6h3M2.500 4v5M8 4l4 4M12 4L8 8"/></svg>
      <svg class="ml-[12px]" width="12" height="12" fill="none" stroke="#aaa"><path d="M1 11a10 10 0 0 1 10-10M4 11a7 7 0 0 1 7-7M7 11a4 4 0 0 1 4-4" stroke-width=".9"/><circle cx="10" cy="10" r="1.200" fill="#ccc" stroke="none"/></svg>
      <svg class="ml-[8px]" width="16" height="14" fill="none" stroke="#ddd"><path d="M1 5h2.500L7 1.500v11L3.500 9H1zM10 4a4 4 0 0 1 0 6M12.500 2a7 7 0 0 1 0 10"/></svg>
      <span class="ml-[14px] text-[11px] whitespace-nowrap">07:05 p. m.</span>
    </div>
  </div>

</body>
</html>
